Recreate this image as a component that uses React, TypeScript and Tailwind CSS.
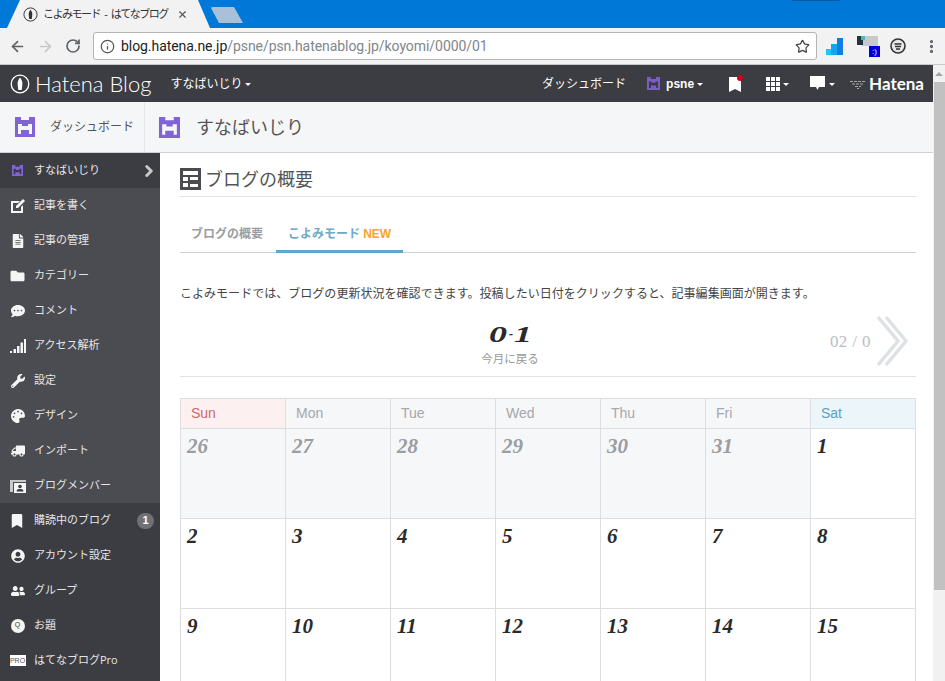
import { ArrowLeft, ArrowRight, ChevronRight, Info, MoreVertical, RotateCw, Star, X } from "lucide-react";
import {
  FaBookmark,
  FaCommentDots,
  FaFileAlt,
  FaFolder,
  FaPalette,
  FaTruck,
  FaUserCircle,
  FaUserFriends,
  FaWrench,
} from "react-icons/fa";
import type { ReactNode } from "react";

const sans = "font-['Liberation_Sans','Noto_Sans_CJK_JP',sans-serif]";
const jp = "font-['Open_Sans','Noto_Sans_CJK_JP',sans-serif]";
const didone = "font-['Liberation_Serif',serif]";

function Castle({ className, hole = "#f5f6f8" }: { className: string; hole?: string }) {
  return (
    <svg viewBox="0 0 20 20" className={className}>
      <path d="M0 0h6v3h8V0h6v20H0z" fill="currentColor" />
      <path d="M3 7h4v2h6V7h4v10h-3v-4H6v4H3z" fill={hole} />
    </svg>
  );
}

function PenLogo({ size = 20 }: { size?: number }) {
  return (
    <svg viewBox="0 0 20 20" width={size} height={size} className="shrink-0">
      <circle cx="10" cy="10" r="8.8" fill="none" stroke="currentColor" strokeWidth="1.3" />
      <path d="M10 3.5c2.2 2.5 2.8 5 2.2 8.5l-.5 4H8.300l-.5-4C7.200 8.500 7.800 6 10 3.500z" fill="currentColor" />
    </svg>
  );
}

function Caret({ className = "" }: { className?: string }) {
  return <span className={`inline-block border-x-[3px] border-t-[3px] border-x-transparent border-t-current ${className}`} />;
}

function Browser() {
  return (
    <>
      <div className="flex h-7 items-end bg-[#0078d7]">
        <div className="relative ml-[7px] flex h-7 w-[203px] items-center">
          <svg viewBox="0 0 203 28" className="absolute inset-0 h-full w-full" preserveAspectRatio="none">
            <path d="M0 28 L13 0 H191 L203 28 Z" fill="#f2f2f2" />
          </svg>
          <div className="relative ml-4 flex items-center text-[#333]">
            <PenLogo size={15} />
            <span className={`ml-[5px] w-[134px] text-[11px] tracking-[-1.5px] [word-spacing:3px] whitespace-nowrap ${jp}`}>こよみモード - はてなブログ</span>
            <X size={11} strokeWidth={2.5} className="text-[#555]" />
          </div>
        </div>
        <svg viewBox="0 0 34 16" className="mb-[5px] ml-[1px] h-4 w-[34px]">
          <path d="M0 1 Q0 0 2 0 H23 L32 16 H8 Z" fill="#a9c0d6" />
        </svg>
        <div className="ml-auto mr-[105px] h-px w-[48px] self-start bg-[#005a9e]" />
      </div>
      <div className="flex h-[37px] items-center border-b border-[#c9c9c9] bg-[#f2f2f2]">
        <ArrowLeft size={17} strokeWidth={2.4} className="ml-[9px] text-[#5f6368]" />
        <ArrowRight size={17} strokeWidth={2.4} className="ml-[11px] text-[#c8c9cb]" />
        <RotateCw size={16} strokeWidth={2.6} className="ml-[11px] text-[#5f6368]" />
        <div className="ml-[12px] flex h-7 w-[724px] items-center rounded-[3px] border border-[#b4b4b4] bg-white">
          <Info size={15} strokeWidth={2} className="ml-[6px] text-[#555]" />
          <span className="ml-[6px] font-['Roboto',sans-serif] text-[14px] tracking-[-0.06px] whitespace-nowrap text-[#222]">
            blog.hatena.ne.jp<span className="text-[#80868b]">/psne/psn.hatenablog.jp/koyomi/0000/01</span>
          </span>
          <Star size={15} strokeWidth={2} className="mr-[6px] ml-auto text-[#444]" />
        </div>
        <svg viewBox="0 0 17 17" className="ml-[9px] h-[17px] w-[17px]">
          <path d="M11 0h6v17h-6z" fill="#0f7fe8" />
          <path d="M5 6h6v11H5z" fill="#12a6f2" />
          <path d="M0 11h5v6H0z" fill="#19c9f4" />
        </svg>
        <div className="relative ml-[14px] h-[22px] w-[24px]">
          <div className="absolute top-[1px] left-[5px] h-[10px] w-[16px] bg-[#c9c9c9]" />
          <div className="absolute top-[1px] left-0 h-[9px] w-[6px] bg-[#25343c]" />
          <div className="absolute top-[1px] left-[4px] h-[4px] w-[4px] bg-[#3fbfc0]" />
          <div className={`absolute top-[11px] left-[12px] flex h-[11px] w-[11px] items-center justify-center bg-[#0000d8] text-[8px] leading-none text-white ${sans}`}>:)</div>
        </div>
        <svg viewBox="0 0 16 16" className="ml-[9px] h-4 w-4">
          <circle cx="8" cy="8" r="7" fill="#e8e8e8" stroke="#333" strokeWidth="1.6" />
          <path d="M4.500 6h7M5 8.500h6M6 11h4" stroke="#333" strokeWidth="1.300" fill="none" />
        </svg>
        <MoreVertical size={17} strokeWidth={2.6} className="ml-[17px] text-[#5f6368]" />
      </div>
    </>
  );
}

function TopBar() {
  return (
    <div className={`flex h-[37px] items-center bg-[#3c3d42] text-white ${jp}`}>
      <div className="ml-[10px] flex items-center">
        <PenLogo size={20} />
        <span className="ml-[5px] font-['Lato',sans-serif] text-[22px] leading-none font-light">Hatena Blog</span>
      </div>
      <span className="ml-[19px] text-[12px]">すなばいじり</span>
      <Caret className="mt-[2px] ml-[3px]" />
      <span className="ml-auto text-[12px]">ダッシュボード</span>
      <Castle className="ml-[21px] h-[13px] w-[13px] text-[#7b5dc8]" hole="#3c3d42" />
      <span className={`ml-[6px] text-[12px] font-bold ${sans}`}>psne</span>
      <Caret className="mt-[2px] ml-[3px]" />
      <div className="relative ml-[26px] h-4 w-3">
        <svg viewBox="0 0 12 16" className="h-4 w-3">
          <path d="M0 1h12v15l-6-3-6 3z" fill="#fff" />
        </svg>
        <div className="absolute -top-[1px] -right-[2px] h-[6px] w-[6px] rounded-full bg-[#d0021b]" />
      </div>
      <div className="ml-[25px] grid h-[14px] w-[14px] grid-cols-3 gap-[1px]">
        {Array.from({ length: 9 }).map((_, i) => (
          <div key={i} className="bg-white" />
        ))}
      </div>
      <Caret className="mt-[1px] ml-[3px]" />
      <svg viewBox="0 0 15 15" className="ml-[21px] h-[15px] w-[15px]">
        <path d="M0 0h15v11H9l-1.500 3L6 11H0z" fill="#fff" />
      </svg>
      <Caret className="mt-[1px] ml-[4px]" />
      <svg viewBox="0 0 16 10" className="ml-[15px] h-[10px] w-4 text-[#aaa]">
        <path d="M0 2.500h16M2 5h12M5 7.500h6M7 9.500h2" stroke="currentColor" strokeWidth="1" strokeDasharray="3 1" />
      </svg>
      <span className="ml-[3px] mr-[9px] font-['Lato',sans-serif] text-[17px] leading-none font-bold">Hatena</span>
    </div>
  );
}

function SubBar() {
  return (
    <div className={`flex h-[51px] items-stretch border-b border-[#cfd1d4] bg-[#f5f6f8] ${jp}`}>
      <div className="flex w-[145px] items-center border-r border-[#e4e5e7]">
        <Castle className="ml-[15px] h-[20px] w-[20px] text-[#8163d8]" />
        <span className="ml-[15px] text-[12px] text-[#555]">ダッシュボード</span>
      </div>
      <div className="flex items-center">
        <Castle className="ml-[14px] h-[21px] w-[21px] text-[#8163d8]" />
        <span className="ml-[16px] text-[18px] text-[#555]">すなばいじり</span>
      </div>
    </div>
  );
}

type NavEntry = { label: string; icon: ReactNode };

const iconClass = "h-[14px] w-[14px] text-[#f5f5f5]";

const upperNav: NavEntry[] = [
  {
    label: "記事を書く",
    icon: (
      <svg viewBox="0 0 14 14" className="h-[14px] w-[14px]">
        <path d="M0 2h9L7 4H2v8h8V8l2-2v8H0z" fill="#f5f5f5" />
        <path d="M5 7l7-7 2 2-7 7H5z" fill="#f5f5f5" />
      </svg>
    ),
  },
  { label: "記事の管理", icon: <FaFileAlt className={iconClass} /> },
  { label: "カテゴリー", icon: <FaFolder className={iconClass + " w-[15px]"} /> },
  { label: "コメント", icon: <FaCommentDots className={iconClass} /> },
  {
    label: "アクセス解析",
    icon: (
      <svg viewBox="0 0 16 14" className="h-[14px] w-4">
        <path d="M0 12h2v2H0zM3.500 10h2.500v4H3.500zM7 7h2.500v7H7zM10.500 3.500H13V14h-2.500zM14 0h2v14h-2z" fill="#f5f5f5" />
      </svg>
    ),
  },
  { label: "設定", icon: <FaWrench className={iconClass} /> },
  { label: "デザイン", icon: <FaPalette className={iconClass} /> },
  { label: "インポート", icon: <FaTruck className={iconClass + " w-4 -scale-x-100"} /> },
  {
    label: "ブログメンバー",
    icon: (
      <svg viewBox="0 0 16 14" className="h-[14px] w-4">
        <path d="M0 1h16v2H0zM0 3h3v10H0z" fill="#c9c9c9" />
        <path d="M4 4h12v10H4z" fill="#f5f5f5" />
        <circle cx="10" cy="7.500" r="1.800" fill="#3c3d42" />
        <path d="M6.500 12.500c0-2 1.500-2.500 3.500-2.500s3.500.5 3.500 2.500z" fill="#3c3d42" />
      </svg>
    ),
  },
];

const lowerNav: NavEntry[] = [
  { label: "アカウント設定", icon: <FaUserCircle className={iconClass} /> },
  { label: "グループ", icon: <FaUserFriends className={iconClass + " w-4"} /> },
  {
    label: "お題",
    icon: (
      <div className={`flex h-[14px] w-[14px] items-center justify-center rounded-full bg-[#f5f5f5] text-[7px] text-[#3c3d42] ${sans}`}>Q</div>
    ),
  },
  {
    label: "はてなブログPro",
    icon: (
      <div className={`flex h-[11px] w-4 items-center justify-center bg-white text-[7px] leading-none text-[#555] ${sans}`}>PRO</div>
    ),
  },
];

function NavRow({ item }: { item: NavEntry }) {
  return (
    <div className="flex h-[35px] items-center">
      <div className="flex w-[34px] justify-center pl-[1px]">{item.icon}</div>
      <span className="text-[11px] text-[#e6e6e6]">{item.label}</span>
    </div>
  );
}

function Sidebar() {
  return (
    <div className={`w-40 shrink-0 bg-[#3c3d42] ${jp}`}>
      <div className="flex h-[35px] items-center">
        <div className="flex w-[34px] justify-center">
          <Castle className="h-[11px] w-[11px] text-[#8163d8]" hole="#3c3d42" />
        </div>
        <span className="text-[11px] text-[#e6e6e6]">すなばいじり</span>
        <ChevronRight size={18} strokeWidth={4} className="mr-[2px] ml-auto text-[#c9c9c9]" />
      </div>
      <div className="bg-[#4b4c51]">
        {upperNav.map((item) => (
          <NavRow key={item.label} item={item} />
        ))}
      </div>
      <div className="flex h-[35px] items-center">
        <div className="flex w-[34px] justify-center">
          <FaBookmark className="h-[14px] w-[12px] text-[#f5f5f5]" />
        </div>
        <span className="text-[11px] text-[#e6e6e6]">購読中のブログ</span>
        <span className={`mr-[6px] ml-auto flex h-4 w-[17px] items-center justify-center rounded-full bg-[#6f7177] text-[11px] font-bold text-white ${sans}`}>1</span>
      </div>
      {lowerNav.map((item) => (
        <NavRow key={item.label} item={item} />
      ))}
    </div>
  );
}

const weekdays = ["Sun", "Mon", "Tue", "Wed", "Thu", "Fri", "Sat"];
const prevMonth = ["26", "27", "28", "29", "30", "31"];

function DayCell({ day, muted }: { day: string; muted?: boolean }) {
  return (
    <div className={`h-[90px] border-r border-b border-[#dcdee1] pt-[3px] pl-[6px] ${muted ? "bg-[#f5f7f9] text-[#9a9da1]" : "bg-white text-[#2a2a2a]"}`}>
      <span className={`text-[21px] leading-[28px] font-bold italic ${didone}`}>{day}</span>
    </div>
  );
}

function Calendar() {
  const days = Array.from({ length: 15 }, (_, i) => String(i + 1));
  return (
    <div className="mt-[21px] grid w-[736px] grid-cols-[repeat(7,105px)] border-t border-l border-[#dcdee1]">
      {weekdays.map((d) => (
        <div
          key={d}
          className={`flex h-[30px] items-center border-r border-b border-[#dcdee1] pl-[10px] text-[14px] ${sans} ${
            d === "Sun" ? "bg-[#fdf0f0] text-[#c96a6a]" : d === "Sat" ? "bg-[#ebf5fa] text-[#5b9fc2]" : "bg-[#f5f7f9] text-[#a5a8ac]"
          }`}
        >
          {d}
        </div>
      ))}
      {prevMonth.map((d) => (
        <DayCell key={d} day={d} muted />
      ))}
      {days.map((d) => (
        <DayCell key={d} day={d} />
      ))}
    </div>
  );
}

function Main() {
  return (
    <div className={`min-w-0 flex-1 overflow-hidden bg-white pt-[15px] pl-5 ${jp}`}>
      <div className="flex h-[29px] w-[736px] items-start border-b border-[#e2e3e5]">
        <svg viewBox="0 0 21 22" className="h-[22px] w-[21px]">
          <path d="M0 0h21v22H0z" fill="#4a4a4f" />
          <path d="M3 3h15v4H3zM3 9h5v4H3zM3 15h5v4H3zM10 9h8v10h-8z" fill="#fff" />
          <path d="M10 12h8v4h-8z" fill="#4a4a4f" />
        </svg>
        <span className="ml-[4px] text-[18px] leading-[22px] text-[#555]">ブログの概要</span>
      </div>
      <div className="mt-[22px] flex h-[34px] w-[736px] items-stretch border-b border-[#cfd1d4]">
        <span className="ml-[11px] pt-[6px] text-[12px] font-bold text-[#9a9da1]">ブログの概要</span>
        <div className="ml-[13px] -mb-px w-[127px] border-b-[3px] border-[#5ea8c9] pt-[6px] pl-[12px] text-[12px] font-bold text-[#6ea9c5]">
          こよみモード <span className={`text-[#f5a623] ${sans}`}>NEW</span>
        </div>
      </div>
      <p className="mt-[32px] text-[12px] leading-[18px] tracking-[0.03px] whitespace-nowrap text-[#444]">
        こよみモードでは、ブログの更新状況を確認できます。投稿したい日付をクリックすると、記事編集画面が開きます。
      </p>
      <div className="relative mt-[11px] h-[63px] w-[736px] border-b border-[#e2e3e5] pr-[76px] text-center">
        <div className={`flex h-[36px] items-center justify-center pt-[3px] text-[24px] leading-none font-bold text-[#2a2a2a] italic ${didone}`}>
          <span className="inline-block w-[20px] scale-x-[1.5]">0</span>
          <span className="mx-[1px] text-[12px]">-</span>
          <span className="inline-block w-[18px] scale-x-[1.5]">1</span>
        </div>
        <div className="text-[11.5px] leading-[18px] text-[#999]">今月に戻る</div>
        <div className="absolute top-[2px] right-[8px] flex h-[49px] items-center">
          <span className={`mt-[2px] text-[17px] tracking-[0.4px] text-[#bcbec2] ${didone}`}>02 / 0</span>
          <svg viewBox="0 0 32 50" className="ml-[5px] h-[50px] w-8 text-[#dfe2e4]">
            <path d="M2 1l20 24L2 49M10 1l20 24-20 24" fill="none" stroke="currentColor" strokeWidth="3.5" />
          </svg>
        </div>
      </div>
      <Calendar />
    </div>
  );
}

export default function App() {
  return (
    <div className="h-[681px] w-[945px] overflow-hidden bg-white">
      <Browser />
      <div className="flex">
        <div className="w-[933px] shrink-0">
          <TopBar />
          <SubBar />
          <div className="flex">
            <Sidebar />
            <Main />
          </div>
        </div>
        <div className="w-3 shrink-0 bg-[#f1f1f1]">
          <div className="flex h-[17px] items-center justify-center">
            <div className="border-x-[4px] border-b-[4px] border-x-transparent border-b-[#a3a3a3]" />
          </div>
          <div className="ml-[1px] h-[508px] bg-[#c1c1c1]" />
        </div>
      </div>
    </div>
  );
}
